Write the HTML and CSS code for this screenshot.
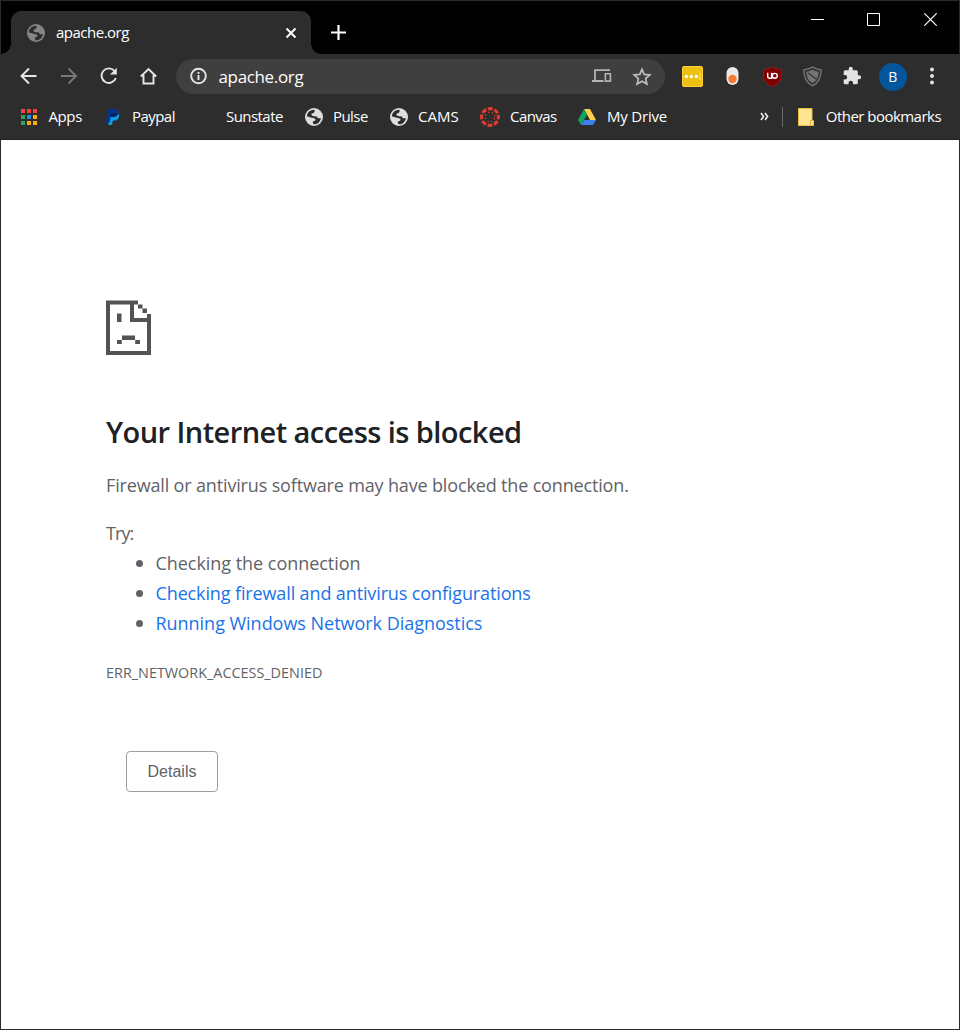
FILE: index.html
```html
<!DOCTYPE html>
<html lang="en">
<head>
<meta charset="utf-8">
<title>apache.org</title>
<link rel="stylesheet" href="styles.css">
</head>
<body>
<svg class="defs" width="0" height="0">
  <symbol id="globe" viewBox="0 0 24 24"><circle cx="12" cy="12" r="12" fill="currentColor"/><path d="M2.500 11C3 5.500 7 2.500 12 2.300L13.200 3.800 11.500 6.500 8.500 7.500 9 10 12 11 16 11.200 17 13.500 21.300 13.500C20.300 18.500 16.500 21.500 12 21.700L10.500 20.300 10.500 18 13.500 17 14 14.500 11 13.300 7.500 12.500Z" fill="var(--land)"/></symbol>
</svg>
<div class="window">
  <header class="tabstrip">
    <div class="tab">
      <svg class="globe tab-globe" width="18" height="18"><use href="#globe"/></svg>
      <span class="tab-title">apache.org</span>
      <svg class="tab-close" width="12" height="12" viewBox="0 0 12 12"><path d="M1.500 1.500l9 9M10.500 1.500l-9 9" stroke="#fff" stroke-width="1.900"/></svg>
    </div>
    <svg class="new-tab" width="17" height="17" viewBox="0 0 17 17"><path d="M8.500 1v15M1 8.500h15" stroke="#fff" stroke-width="2.200"/></svg>
    <div class="controls">
      <svg width="13" height="13"><path d="M0 6.500h13" stroke="#fff"/></svg>
      <svg width="13" height="13"><path d="M.5.5h12v12H.5z" stroke="#fff" fill="none"/></svg>
      <svg width="13" height="13"><path d="M.3.3l12.400 12.400M12.700.3L.3 12.700" stroke="#fff" stroke-width="1.200"/></svg>
    </div>
  </header>
  <div class="toolbar">
    <div class="nav">
      <svg width="20" height="20" viewBox="0 0 20 20"><path d="M17.500 10H3M10 2.500L2.500 10l7.500 7.500" class="line"/></svg>
      <svg class="dim" width="20" height="20" viewBox="0 0 20 20"><path d="M2 10h14.500M9.500 2.500L17 10l-7.500 7.500" class="line"/></svg>
      <svg width="20" height="20" viewBox="0 0 20 20"><path d="M15.500 5A7.300 7.300 0 1 0 16.800 12" class="line"/><path d="M17.800 1.800V8.500H11z" fill="#e6e6e6"/></svg>
      <svg width="20" height="20" viewBox="0 0 20 20"><path d="M1.800 10.500L9.500 3l7.700 7.500M4.500 9v8.500h10V9" class="line"/></svg>
    </div>
    <div class="omnibox">
      <svg class="info" width="18" height="18" viewBox="0 0 18 18"><circle cx="9.500" cy="9" r="7.300" class="line"/><path d="M9.500 8v5M9.500 5v1.800" class="line"/></svg>
      <span class="url">apache.org</span>
      <svg class="devices" width="20" height="14" viewBox="0 0 20 14"><path d="M3 11V1.200h15M0 12h11.500" stroke="#b4b4b4" stroke-width="1.800" fill="none"/><path d="M13.400 4.700h5v7.400h-5z" stroke="#b4b4b4" stroke-width="1.600" fill="none"/></svg>
      <svg class="star" width="20" height="20" viewBox="0 0 20 20"><path d="M10 2.300l2.200 5.100 5.600.5-4.200 3.700 1.300 5.500L10 14.200l-4.900 2.900 1.300-5.500-4.200-3.700 5.600-.5z" fill="none" stroke="#bcbcbc" stroke-width="1.700"/></svg>
    </div>
    <div class="extensions">
      <svg width="21" height="21" viewBox="0 0 21 21"><rect x=".5" y=".5" width="20" height="20" rx="1.500" fill="#eec011" stroke="#ffd233"/><g fill="#fff"><circle cx="4.300" cy="10.500" r="1.700"/><circle cx="9.300" cy="10.500" r="1.700"/><circle cx="14.300" cy="10.500" r="1.700"/></g><path d="M18 7v7" stroke="#ffe47a"/></svg>
      <svg width="13" height="20" viewBox="0 0 13 20"><rect x=".5" y="1" width="12" height="18" rx="6" fill="#ebe8e6"/><circle cx="6.500" cy="13" r="4.200" fill="#f47c30"/></svg>
      <svg width="21" height="21" viewBox="-.5 0 21 21"><path d="M10 .7C7 2.700 4 3.500 1 3.600v6c0 5.300 4 8.600 9 10.900 5-2.300 9-5.600 9-10.900v-6C16 3.500 13 2.700 10 .7z" fill="#800000" stroke="#a31c1c" stroke-width=".8"/><path d="M5.200 6.800v3.400c0 1.500.6 2 1.900 2h2V6.800" fill="none" stroke="#fff" stroke-width="1.400"/><ellipse cx="12.300" cy="9.800" rx="2.500" ry="2.400" fill="none" stroke="#fff" stroke-width="1.400"/></svg>
      <svg width="21" height="21" viewBox="-.5 0 21 21"><path d="M10 1C7 2.900 4 3.600 1.300 3.800c0 7 1.700 12.700 8.700 16.100 7-3.400 8.700-9.100 8.700-16.100C16 3.600 13 2.900 10 1z" fill="#343434" stroke="#777" stroke-width="1.300"/><path d="M10 3.800c-2 1.200-4 1.700-6 1.900 0 5 1.500 8.800 6 11.400 4.500-2.600 6-6.400 6-11.400-2-.2-4-.7-6-1.900z" fill="#747474"/><path d="M5.500 7l8.500 6.300" stroke="#343434" stroke-width="1.300"/></svg>
      <svg width="20" height="20" viewBox="0 0 24 24"><path d="M20.500 11H19V7a2 2 0 0 0-2-2h-4V3.500a2.500 2.500 0 0 0-5 0V5H4a2 2 0 0 0-2 2v3.800h1.500a2.700 2.700 0 0 1 0 5.400H2V20a2 2 0 0 0 2 2h3.800v-1.500a2.700 2.700 0 0 1 5.400 0V22H17a2 2 0 0 0 2-2v-4h1.500a2.500 2.500 0 0 0 0-5z" fill="#e2e2e2"/></svg>
      <span class="avatar">B</span>
      <svg width="4" height="18" viewBox="0 0 4 18"><g fill="#e2e2e2"><circle cx="2" cy="2.500" r="2"/><circle cx="2" cy="9" r="2"/><circle cx="2" cy="15.500" r="2"/></g></svg>
    </div>
  </div>
  <nav class="bookmarks">
    <div class="items">
      <div class="item apps"><svg width="18" height="18" viewBox="0 0 18 18"><path d="M1 1h4v4H1zM7 1h4v4H7zM13 1h4v4h-4z" fill="#f4433a"/><path d="M1 7h4v4H1zM1 13h4v4H1z" fill="#34a05a"/><path d="M7 7h4v4H7z" fill="#1f8cf0"/><path d="M13 7h4v4h-4zM7 13h4v4H7zM13 13h4v4h-4z" fill="#fbaa12"/></svg><span>Apps</span></div>
      <div class="item paypal"><svg width="18" height="18" viewBox="0 0 18 18"><path d="M6 5h7.500c1.900.9 2 2.800 1.300 4.600-.8 2.300-2.500 3.200-5 3.200H8.800L8 17H4.300z" fill="#0c9ae0"/><path d="M4.300 1h6.500c2.700 0 4 1.600 3.400 4.200-.6 2.500-2.700 3.600-5.400 3.600H6.700L5.500 14.300H1.700z" fill="#05358a"/><path d="M6.900 5.200h7.300c-.6 2.500-2.700 3.600-5.400 3.600H6.200z" fill="#06205c"/></svg><span>Paypal</span></div>
      <div class="item sunstate"><i class="blank"></i><span>Sunstate</span></div>
      <div class="item pulse"><svg class="globe" width="18" height="18"><use href="#globe"/></svg><span>Pulse</span></div>
      <div class="item cams"><svg class="globe" width="18" height="18"><use href="#globe"/></svg><span>CAMS</span></div>
      <div class="item canvas"><svg width="20" height="20" viewBox="0 0 20 20"><circle cx="10" cy="10" r="8.400" fill="none" stroke="#e63b2e" stroke-width="3.100" stroke-dasharray="4.900 1.697" stroke-dashoffset="2.450"/><circle cx="10" cy="10" r="4.800" fill="none" stroke="#e63b2e" stroke-width="1.300" stroke-dasharray="1.300 2.470" stroke-dashoffset="-1.230"/></svg><span>Canvas</span></div>
      <div class="item drive"><svg width="18" height="18" viewBox="0 0 18 18"><path d="M6 1h6l6 11h-6z" fill="#ffcf48"/><path d="M6 1l3 5.500L3.200 17 0 12z" fill="#11a45f"/><path d="M6.200 12H18l-3 5H3.200z" fill="#3b80ee"/></svg><span>My Drive</span></div>
    </div>
    <svg class="more" width="9" height="9" viewBox="0 0 9 9"><path d="M1 1l2.600 3.500L1 8M5 1l2.600 3.500L5 8" fill="none" stroke="#eee" stroke-width="1.600"/></svg>
    <i class="divider"></i>
    <svg width="16" height="18" viewBox="0 0 16 18"><path d="M.5.500h13.500v12h1.500v5H.5z" fill="#ffe592" stroke="#e8bf43"/><path d="M12.500 17v-4.500H15" fill="none" stroke="#dbb040"/></svg>
    <span class="other">Other bookmarks</span>
  </nav>
  <main class="page">
    <svg class="sad" width="46" height="55" viewBox="0 0 46 55" fill="#535353"><path d="M0 .5h32v4H4v46.500h37V22H24V4.500h4V18h13v-4h4v41H0z"/><path d="M32 4.500h4.500v4H32zM36.500 8.500H41V13h-4.500zM11 13.500h4.500V22H11zM16 35.500h13V40H16zM11 40h4.800v4H11zM29.200 40H34v4h-4.800z"/></svg>
    <h1>Your Internet access is blocked</h1>
    <p class="summary">Firewall or antivirus software may have blocked the connection.</p>
    <p class="try">Try:</p>
    <ul>
      <li class="check">Checking the connection</li>
      <li class="configure"><a>Checking firewall and antivirus configurations</a></li>
      <li class="diagnose"><a>Running Windows Network Diagnostics</a></li>
    </ul>
    <p class="code">ERR_NETWORK_ACCESS_DENIED</p>
    <button class="details">Details</button>
  </main>
</div>
</body>
</html>
```
FILE: styles.css
```css
* { box-sizing: border-box; }
body { margin: 0; font-family: "Open Sans", "Noto Sans", sans-serif; background: #fff; }
svg { display: block; flex: none; }
.defs { position: absolute; }
.window { width: 960px; height: 1030px; border: 1px solid #2b2b2b; display: flex; flex-direction: column; overflow: hidden; }
.line { fill: none; stroke: #e6e6e6; stroke-width: 1.900; }
.dim .line { stroke: #777; }
.globe { color: #dedede; --land: #2d2d2d; }
.tab-globe { color: #858585; }

.tabstrip { height: 53px; flex: none; background: #000; display: flex; align-items: flex-start; padding: 10px 22px 0 10px; }
.tab { position: relative; width: 300px; height: 43px; background: #2d2d2d; border-radius: 10px 10px 0 0; display: flex; align-items: center; padding: 0 14px 0 16px; color: #fff; font-size: 15px; }
.tab::before, .tab::after { content: ""; position: absolute; bottom: 0; width: 10px; height: 10px; }
.tab::before { left: -10px; background: radial-gradient(circle at 0 0, #000 9.500px, #2d2d2d 10px); }
.tab::after { right: -10px; background: radial-gradient(circle at 100% 0, #000 9.500px, #2d2d2d 10px); }
.tab-title { margin-left: 11px; padding-bottom: 2px; letter-spacing: -0.500px; }
.tab-close { margin-left: auto; }
.new-tab { margin: 13px 0 0 19px; }
.controls { margin: 2px 0 0 auto; display: flex; }
.controls svg + svg { margin-left: 43px; }
.controls svg:last-child { margin-left: 44px; }

.toolbar { height: 45px; flex: none; background: #2d2d2d; display: flex; align-items: center; padding-left: 8px; }
.nav { display: grid; grid-template-columns: repeat(4, 40px); justify-items: center; width: 167px; padding-bottom: 1px; }
.omnibox { width: 489px; height: 35px; border-radius: 18px; background: #3f3f3f; display: flex; align-items: center; padding: 0 13px; color: #fff; }
.info { margin-bottom: 1px; }
.url { margin-left: 11.500px; font-size: 17px; letter-spacing: -0.350px; }
.devices { margin-left: auto; margin-bottom: 1px; }
.star { margin-left: 20px; }
.extensions { display: grid; grid-template-columns: repeat(7, 40px); align-items: center; justify-items: center; margin-left: 7.400px; padding-bottom: 1px; }
.avatar { width: 28px; height: 28px; border-radius: 50%; background: #03559c; color: #fff; display: grid; place-items: center; font-size: 14px; margin: 1px 0 0 1px; }

.bookmarks { height: 41px; flex: none; background: #2d2d2d; border-bottom: 1px solid #202020; display: flex; align-items: center; padding: 0 18px 5px 19px; color: #fff; font-size: 15px; letter-spacing: -0.400px; white-space: nowrap; }
.bookmarks span { padding-bottom: 2px; }
.items { display: grid; grid-template-columns: 84px 94px 107px 85px 90px 98px 95px; }
.item { display: flex; align-items: center; gap: 10px; }
.apps { gap: 10.500px; }
.paypal { letter-spacing: -0.550px; }
.sunstate, .pulse { letter-spacing: -0.550px; }
.cams { letter-spacing: 0; }
.canvas { letter-spacing: -0.550px; }
.drive { letter-spacing: -0.200px; gap: 11px; }
.blank { width: 18px; }
.more { margin-left: auto; }
.divider { width: 1px; height: 20px; background: #6b6b6b; margin: 0 15px 0 13px; }
.other { margin-left: 12px; letter-spacing: -0.530px; }

.page { flex: 1; padding: 160px 105px 0; color: #5f6368; font-size: 18px; line-height: 30px; display: flex; flex-direction: column; align-items: flex-start; }
.sad { margin-bottom: 58px; }
h1 { margin: 0; font-size: 29px; line-height: 38px; font-weight: 600; color: #202124; letter-spacing: -0.560px; white-space: nowrap; }
p { margin: 0; white-space: nowrap; }
.summary { margin-top: 19px; letter-spacing: -0.155px; }
.try { margin-top: 18px; letter-spacing: -0.900px; }
ul { margin: 0; padding: 0; list-style: none; }
li { display: flex; align-items: center; }
li::before { content: ""; width: 7px; height: 7px; border-radius: 50%; background: #5f6368; margin: 0 12.500px 0 30px; }
.check { letter-spacing: -0.040px; }
.configure { letter-spacing: -0.125px; }
.diagnose { letter-spacing: -0.030px; }
a { color: #1a73e8; }
.code { margin-top: 20px; font-size: 14.400px; letter-spacing: 0; }
.details { margin: 63px 0 0 20px; width: 92px; height: 41px; border: 1px solid #9aa0a6; border-radius: 4px; background: #fff; color: #5f6368; font: 16px "Liberation Sans", Arial, sans-serif; }
```
